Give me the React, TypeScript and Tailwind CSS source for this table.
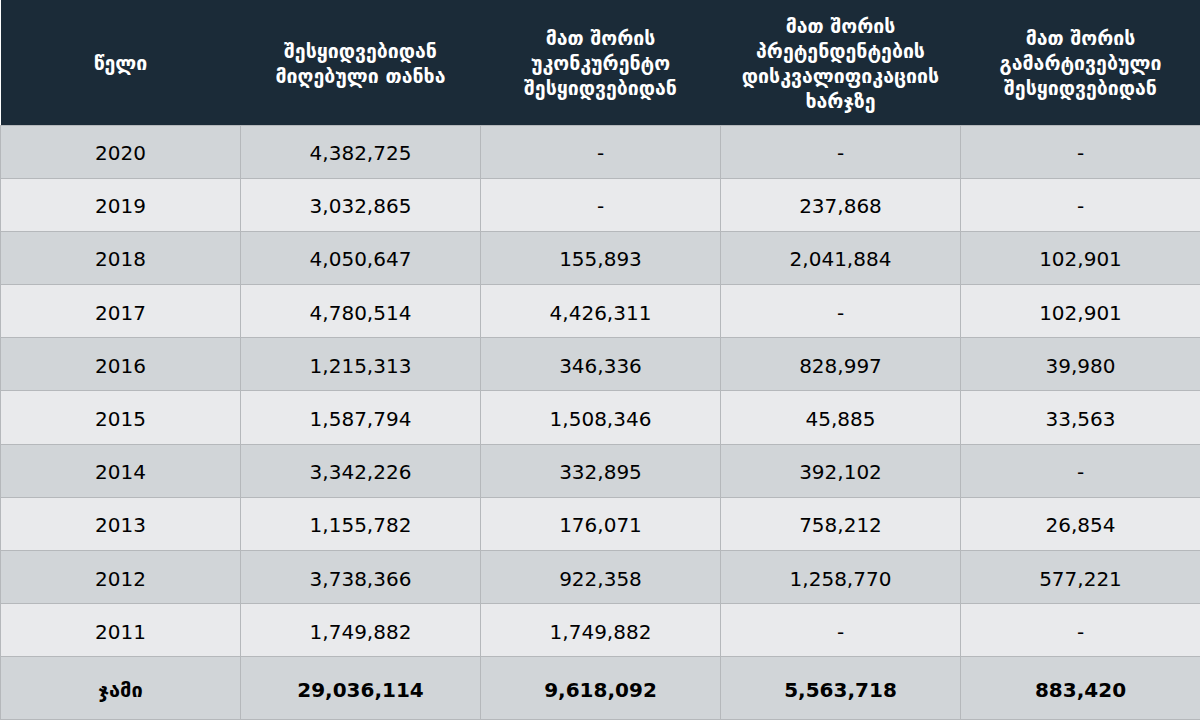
const headers = [
  ["წელი"],
  ["შესყიდვებიდან", "მიღებული თანხა"],
  ["მათ შორის", "უკონკურენტო", "შესყიდვებიდან"],
  ["მათ შორის", "პრეტენდენტების", "დისკვალიფიკაციის", "ხარჯზე"],
  ["მათ შორის", "გამარტივებული", "შესყიდვებიდან"],
];

const rows = [
  ["2020", "4,382,725", "-", "-", "-"],
  ["2019", "3,032,865", "-", "237,868", "-"],
  ["2018", "4,050,647", "155,893", "2,041,884", "102,901"],
  ["2017", "4,780,514", "4,426,311", "-", "102,901"],
  ["2016", "1,215,313", "346,336", "828,997", "39,980"],
  ["2015", "1,587,794", "1,508,346", "45,885", "33,563"],
  ["2014", "3,342,226", "332,895", "392,102", "-"],
  ["2013", "1,155,782", "176,071", "758,212", "26,854"],
  ["2012", "3,738,366", "922,358", "1,258,770", "577,221"],
  ["2011", "1,749,882", "1,749,882", "-", "-"],
];

const total = ["ჯამი", "29,036,114", "9,618,092", "5,563,718", "883,420"];

export default function App() {
  return (
    <div className="w-[1200px] h-[720px] overflow-hidden bg-white font-['DejaVu_Sans',sans-serif] text-black">
      <table className="w-full border-collapse table-fixed">
        <thead>
          <tr className="h-[125px] bg-[#1b2b38]">
            {headers.map((lines, i) => (
              <th key={i} className="w-[240px] text-center align-middle text-white text-[19.5px] font-bold leading-[25px] pt-[3px]">
                {lines.map((l) => (
                  <div key={l}>{l}</div>
                ))}
              </th>
            ))}
          </tr>
        </thead>
        <tbody>
          {rows.map((r, idx) => (
            <tr
              key={r[0]}
              className={`h-[53.2px] ${idx % 2 === 0 ? "bg-[#d1d5d8]" : "bg-[#e9eaec]"}`}
            >
              {r.map((c, j) => (
                <td key={j} className="border border-[#b5b8bb] text-center text-[20px] pt-[3px]">
                  {c}
                </td>
              ))}
            </tr>
          ))}
          <tr className="h-[63px] bg-[#d1d5d8]">
            {total.map((c, j) => (
              <td
                key={j}
                className="border border-[#b5b8bb] text-center font-bold text-[20px] pt-[3px]"
              >
                {c}
              </td>
            ))}
          </tr>
        </tbody>
      </table>
    </div>
  );
}
